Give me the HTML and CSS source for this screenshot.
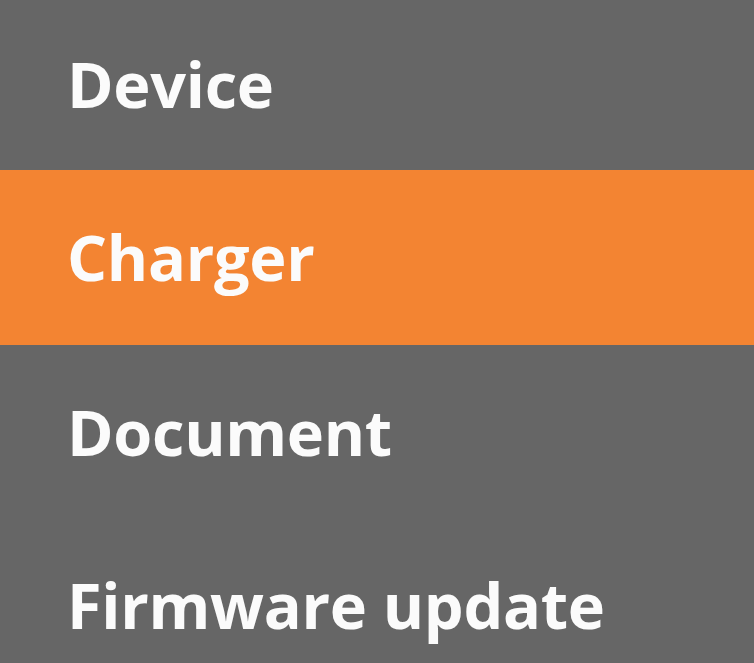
FILE: index.html
```html
<!DOCTYPE html>
<html lang="en">
<head>
<meta charset="utf-8">
<title>Menu</title>
<link rel="stylesheet" href="styles.css">
</head>
<body>
<nav class="menu">
  <div class="item">Device</div>
  <div class="item active">Charger</div>
  <div class="item">Document</div>
  <div class="item">Firmware update</div>
</nav>
</body>
</html>
```
FILE: styles.css
```css
html, body {
  margin: 0;
  padding: 0;
  height: 100%;
  background: #666666;
  overflow: hidden;
}
.menu {
  display: flex;
  flex-direction: column;
  margin-top: -3px;
}
.item {
  height: 173px;
  display: flex;
  align-items: center;
  padding-left: 67px;
  font-family: "Open Sans", "Noto Sans", sans-serif;
  font-weight: 700;
  font-size: 63px;
  color: #fbfbfb;
  letter-spacing: -0.3px;
  box-sizing: border-box;
}
.item.active {
  height: 175px;
  padding-bottom: 2px;
  background: #f38432;
}
```
